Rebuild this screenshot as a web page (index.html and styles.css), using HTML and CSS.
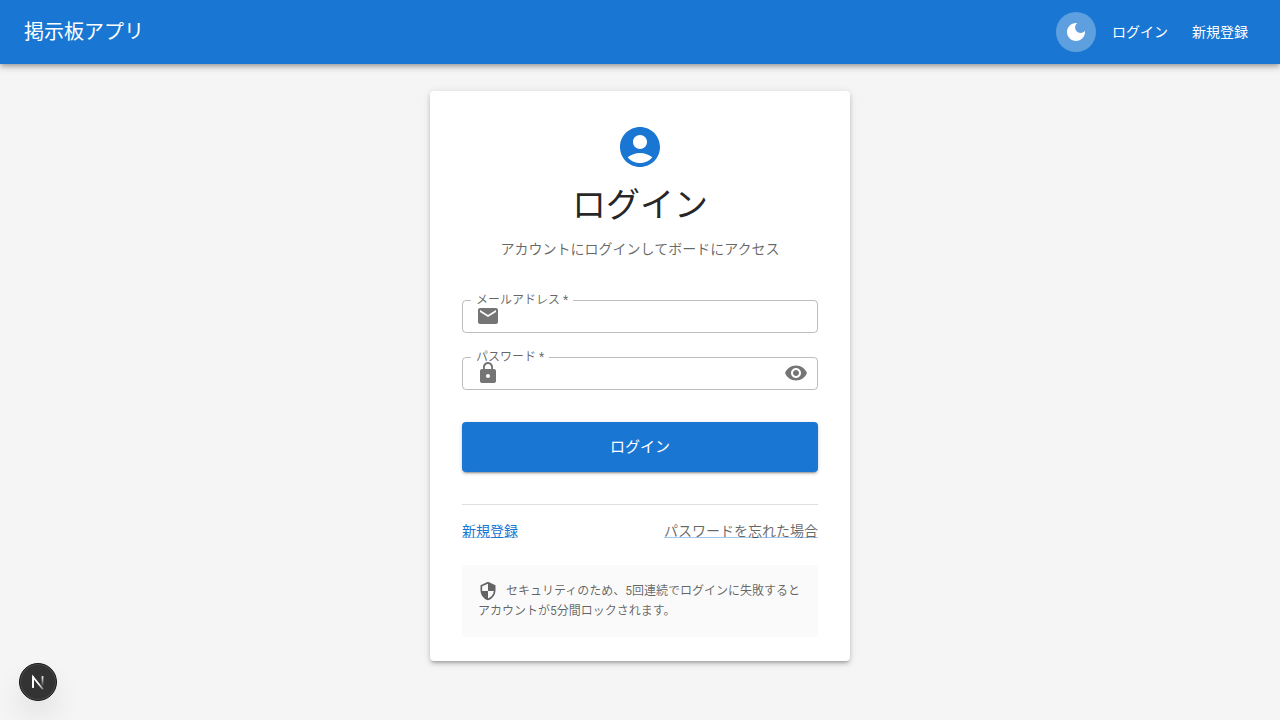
FILE: index.html
```html
<!DOCTYPE html>
<html lang="ja">
<head>
<meta charset="utf-8">
<meta name="viewport" content="width=device-width, initial-scale=1">
<title>掲示板アプリ</title>
<link rel="stylesheet" href="styles.css">
</head>
<body>
<header class="appbar">
  <div class="brand">掲示板アプリ</div>
  <nav class="nav">
    <button class="theme-toggle" type="button" aria-label="テーマ切り替え">
      <svg class="icon-theme" viewBox="0 0 24 24"><path d="M12 3c-4.97 0-9 4.03-9 9s4.03 9 9 9 9-4.03 9-9c0-.46-.04-.92-.1-1.36-.98 1.37-2.58 2.26-4.4 2.26-2.98 0-5.4-2.42-5.4-5.4 0-1.81.89-3.42 2.26-4.4-.44-.06-.9-.1-1.36-.1z"/></svg>
    </button>
    <a class="nav-link" href="#">ログイン</a>
    <a class="nav-link" href="#">新規登録</a>
  </nav>
</header>

<main class="main">
  <section class="card">
    <div class="card-head">
      <svg class="icon-account" viewBox="0 0 24 24"><path d="M12 2C6.48 2 2 6.48 2 12s4.48 10 10 10 10-4.48 10-10S17.52 2 12 2zm0 4c1.93 0 3.5 1.57 3.5 3.5S13.93 13 12 13s-3.500-1.570-3.500-3.500S10.070 6 12 6zm0 14c-2.030 0-4.430-.820-6.140-2.880C7.550 15.800 9.680 15 12 15s4.450.800 6.140 2.120C16.430 19.180 14.030 20 12 20z"/></svg>
      <h1 class="title">ログイン</h1>
      <p class="subtitle">アカウントにログインしてボードにアクセス</p>
    </div>

    <form class="form">
      <div class="field">
        <label class="field-label" for="email">メールアドレス *</label>
        <svg class="icon" viewBox="0 0 24 24"><path d="M20 4H4c-1.100 0-1.990.900-1.990 2L2 18c0 1.100.900 2 2 2h16c1.100 0 2-.900 2-2V6c0-1.100-.900-2-2-2zm0 4l-8 5-8-5V6l8 5 8-5v2z"/></svg>
        <input class="field-input" id="email" type="email" required>
      </div>
      <div class="field">
        <label class="field-label" for="password">パスワード *</label>
        <svg class="icon" viewBox="0 0 24 24"><path d="M18 8h-1V6c0-2.760-2.240-5-5-5S7 3.240 7 6v2H6c-1.100 0-2 .900-2 2v10c0 1.100.900 2 2 2h12c1.100 0 2-.900 2-2V10c0-1.100-.900-2-2-2zm-6 9c-1.100 0-2-.900-2-2s.900-2 2-2 2 .900 2 2-.900 2-2 2zm3.100-9H8.900V6c0-1.710 1.390-3.100 3.100-3.100s3.100 1.390 3.100 3.100v2z"/></svg>
        <input class="field-input" id="password" type="password" required>
        <button class="reveal" type="button" aria-label="パスワードを表示">
          <svg class="icon" viewBox="0 0 24 24"><path d="M12 4.500C7 4.500 2.730 7.610 1 12c1.730 4.390 6 7.500 11 7.500s9.270-3.110 11-7.500c-1.730-4.390-6-7.500-11-7.500zM12 17c-2.760 0-5-2.240-5-5s2.240-5 5-5 5 2.240 5 5-2.240 5-5 5zm0-8c-1.660 0-3 1.340-3 3s1.340 3 3 3 3-1.340 3-3-1.340-3-3-3z"/></svg>
        </button>
      </div>
      <button class="submit" type="submit">ログイン</button>
    </form>

    <div class="links">
      <a class="link" href="#">新規登録</a>
      <a class="link link-muted" href="#">パスワードを忘れた場合</a>
    </div>

    <p class="notice"><svg class="icon-security" viewBox="0 0 24 24"><path d="M12 1L3 5v6c0 5.550 3.840 10.740 9 12 5.160-1.260 9-6.450 9-12V5l-9-4zm0 10.990h7c-.530 4.120-3.280 7.790-7 8.940V12H5V6.300l7-3.110v8.800z"/></svg>セキュリティのため、5回連続でログインに失敗するとアカウントが5分間ロックされます。</p>
  </section>
</main>

<button class="dev-badge" type="button" aria-label="開発ツール">
  <svg class="dev-logo" viewBox="0 0 40 40" fill="none">
    <defs>
      <linearGradient id="diag" x1="21" y1="22" x2="29" y2="31" gradientUnits="userSpaceOnUse"><stop stop-color="#fff"/><stop offset="1" stop-color="#fff" stop-opacity="0"/></linearGradient>
      <linearGradient id="stem" x1="26" y1="13" x2="26" y2="25" gradientUnits="userSpaceOnUse"><stop stop-color="#fff"/><stop offset="1" stop-color="#fff" stop-opacity="0"/></linearGradient>
    </defs>
    <path d="M14.500 26.500V14.500L25.500 28" stroke="url(#diag)" stroke-width="2"/>
    <path d="M14.500 26.500V13.500" stroke="#fff" stroke-width="2"/>
    <path d="M25 13.500V25" stroke="url(#stem)" stroke-width="2"/>
  </svg>
</button>
</body>
</html>
```
FILE: styles.css
```css
* {
  box-sizing: border-box;
}

body {
  margin: 0;
  min-height: 100vh;
  display: flex;
  flex-direction: column;
  background: #f5f5f5;
  color: rgba(0, 0, 0, 0.87);
  font-family: Roboto, "Noto Sans CJK JP", sans-serif;
  font-size: 14px;
  font-weight: 400;
  line-height: 20px;
}

button,
input {
  font: inherit;
}

button {
  border: 0;
  cursor: pointer;
}

svg {
  fill: currentColor;
}

.appbar {
  display: flex;
  align-items: center;
  justify-content: space-between;
  height: 64px;
  padding: 0 24px;
  background: #1976d2;
  color: #fff;
  box-shadow: 0 2px 4px -1px rgba(0, 0, 0, 0.2), 0 4px 5px rgba(0, 0, 0, 0.14), 0 1px 10px rgba(0, 0, 0, 0.12);
}

.brand {
  font-size: 20px;
  line-height: 32px;
}

.nav {
  display: flex;
  align-items: center;
  gap: 8px;
}

.theme-toggle {
  display: flex;
  align-items: center;
  justify-content: center;
  width: 40px;
  height: 40px;
  padding: 0;
  border-radius: 50%;
  background: rgba(255, 255, 255, 0.3);
  color: #fff;
}

.icon-theme {
  width: 24px;
  height: 24px;
}

.nav-link {
  padding: 6px 8px;
  color: inherit;
  text-decoration: none;
}

.main {
  flex: 1;
  display: flex;
  align-items: center;
  justify-content: center;
  padding: 0 16px 32px;
}

.card {
  width: 100%;
  max-width: 420px;
  padding: 32px 32px 24px;
  border-radius: 4px;
  background: #fff;
  box-shadow: 0 3px 3px -2px rgba(0, 0, 0, 0.2), 0 3px 4px rgba(0, 0, 0, 0.14), 0 1px 8px rgba(0, 0, 0, 0.12);
}

.card-head {
  display: flex;
  flex-direction: column;
  align-items: center;
  text-align: center;
}

.icon-account {
  width: 48px;
  height: 48px;
  color: #1976d2;
}

.title {
  margin: 13px 0;
  font-size: 34px;
  font-weight: inherit;
  line-height: 42px;
}

.subtitle {
  margin: 0;
  color: rgba(0, 0, 0, 0.6);
}

.form {
  display: flex;
  flex-direction: column;
  gap: 24px;
  margin-top: 41px;
}

.field {
  position: relative;
  display: flex;
  align-items: center;
  gap: 8px;
  height: 33px;
  padding: 0 9px 0 13px;
  border: 1px solid rgba(0, 0, 0, 0.26);
  border-radius: 4px;
}

.field-label {
  position: absolute;
  top: -8px;
  left: 8px;
  padding: 0 5px;
  background: #fff;
  color: rgba(0, 0, 0, 0.6);
  font-size: 12px;
  line-height: 14px;
}

.icon {
  position: relative;
  flex: none;
  width: 24px;
  height: 24px;
  color: #757575;
}

.field-input {
  flex: 1;
  min-width: 0;
  padding: 0;
  border: 0;
  outline: 0;
  background: transparent;
}

.reveal {
  display: flex;
  padding: 0;
  background: none;
}

.submit {
  height: 50px;
  margin-top: 8px;
  border-radius: 4px;
  background: #1976d2;
  color: #fff;
  font-size: 15px;
  box-shadow: 0 3px 1px -2px rgba(0, 0, 0, 0.2), 0 2px 2px rgba(0, 0, 0, 0.14), 0 1px 5px rgba(0, 0, 0, 0.12);
}

.links {
  display: flex;
  justify-content: space-between;
  margin-top: 32px;
  padding-top: 16px;
  border-top: 1px solid rgba(0, 0, 0, 0.12);
}

.link {
  color: #1976d2;
  text-decoration-color: rgba(25, 118, 210, 0.4);
}

.link-muted {
  color: rgba(0, 0, 0, 0.6);
}

.notice {
  margin: 24px 0 0;
  padding: 16px;
  border-radius: 4px;
  background: #fafafa;
  color: rgba(0, 0, 0, 0.6);
  font-size: 12px;
}

.icon-security {
  width: 20px;
  height: 20px;
  margin-right: 8px;
  vertical-align: middle;
}

.dev-badge {
  position: fixed;
  left: 19px;
  bottom: 19px;
  width: 38px;
  height: 38px;
  padding: 0;
  border: 1px solid #171717;
  border-radius: 50%;
  background: #333;
  box-shadow: inset 0 0 0 1px #4c4c4c, 0 16px 32px -8px rgba(0, 0, 0, 0.24);
}

.dev-logo {
  display: block;
  width: 100%;
  height: 100%;
  fill: none;
}
```
